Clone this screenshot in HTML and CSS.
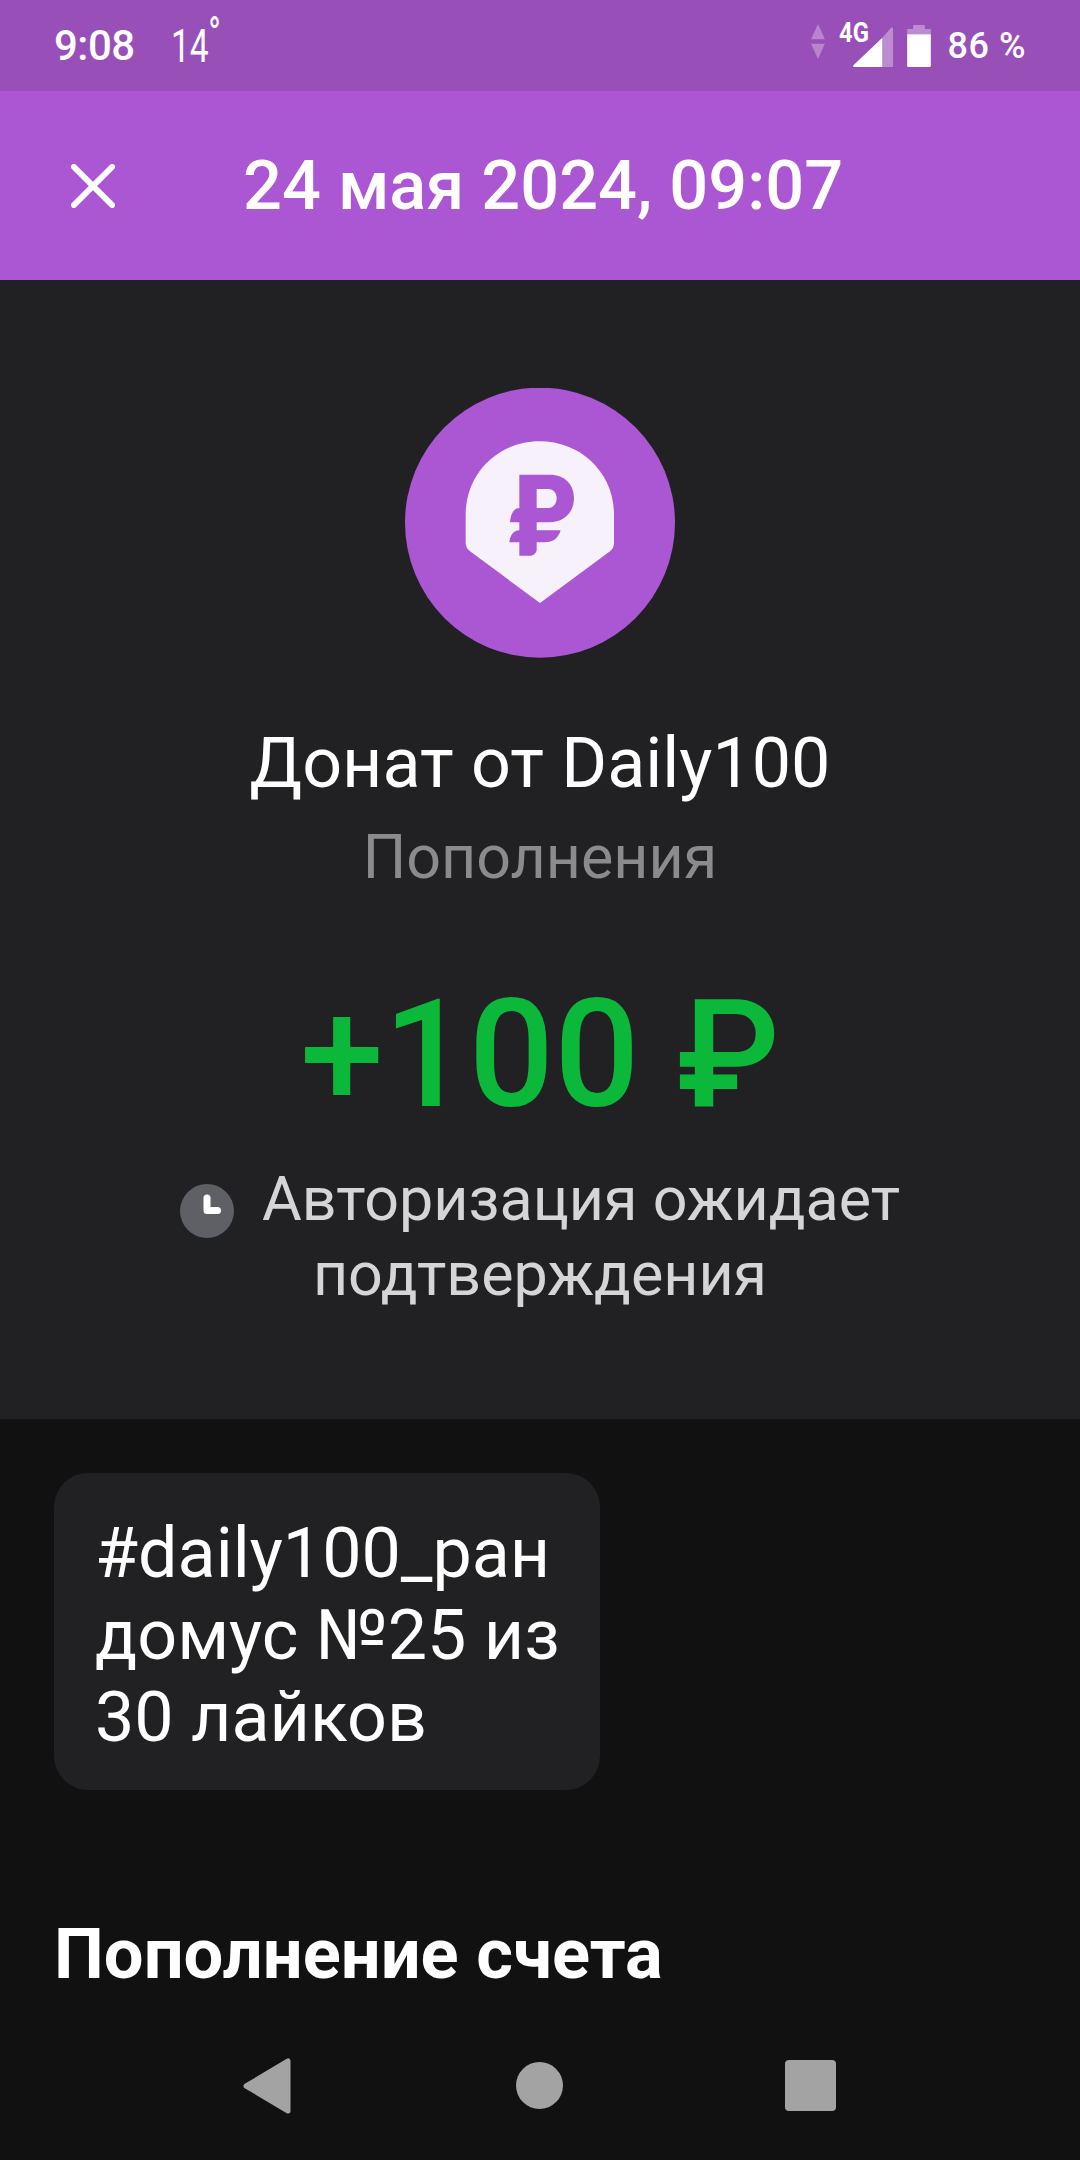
FILE: index.html
```html
<!DOCTYPE html>
<html lang="ru">
<head>
<meta charset="utf-8">
<title>Донат от Daily100</title>
<link rel="stylesheet" href="styles.css">
</head>
<body>
<div class="screen">
  <header class="status">
    <div class="status-left">
      <span class="time">9:08</span>
      <span class="temp">14<span class="deg">°</span></span>
    </div>
    <div class="status-right">
      <svg class="arrows" viewBox="155 72 42 106"><path d="M176 72 197 118H155Z M155 132H197L176 178Z"/></svg>
      <div class="signal">
        <span class="net">4G</span>
        <svg class="bars" viewBox="282 80 120 120"><path class="dim" d="M370 112 396 82Q402 78 402 86V200H370Z"/><path d="M370 112V200H288Q278 200 284 194Z"/></svg>
      </div>
      <svg class="battery" viewBox="444 72 71 126"><path class="dim" d="M462 72H497V84H515V100H444V84H462Z"/><path d="M444 100H515V194Q515 198 511 198H448Q444 198 444 194Z"/></svg>
      <span class="pct">86 %</span>
    </div>
  </header>
  <div class="appbar">
    <svg class="close" viewBox="0 0 46 46"><path d="M3 3 43 43M43 3 3 43"/></svg>
    <h1 class="appbar-title">24 мая 2024, 09:07</h1>
  </div>
  <section class="summary">
    <svg class="logo" viewBox="45 55 810 810">
      <circle class="logo-bg" cx="450" cy="459" r="405"/>
      <path class="logo-pin" d="M227 520V435C227 310 325 215 449 215C573 215 672 310 672 435V520Q672 535 660 545L450 700L240 545Q227 535 227 520Z"/>
      <path class="logo-bg" fill-rule="evenodd" d="M388 315H480C525 315 552 345 552 385C552 430 520 458 478 458H440V482H512C505 505 490 518 465 518H440V540C440 550 430 558 420 558H388V518H358C360 498 370 482 388 482V458H360C362 432 372 415 388 415ZM440 358V415H475C490 415 500 402 500 386C500 370 490 358 475 358Z"/>
    </svg>
    <h2 class="name">Донат от Daily100</h2>
    <p class="category">Пополнения</p>
    <p class="amount">+100 ₽</p>
    <p class="state"><svg class="clock" viewBox="0 0 54 54"><circle cx="27" cy="27" r="27"/><path d="M27 14V26.5H37.5"/></svg>Авторизация ожидает<br>подтверждения</p>
  </section>
  <main class="details">
    <div class="note">#daily100_ран<br>домус №25 из<br>30 лайков</div>
    <h3 class="heading">Пополнение счета</h3>
  </main>
  <nav class="navbar">
    <svg class="nav-back" viewBox="0 0 48 56"><path d="M45 3V53L3 28Z"/></svg>
    <span class="nav-home"></span>
    <span class="nav-recent"></span>
  </nav>
</div>
</body>
</html>
```
FILE: styles.css
```css
* { box-sizing: border-box; margin: 0; padding: 0; }
html, body { width: 1080px; height: 2160px; overflow: hidden; background: #111112; }
body { font-family: Roboto, "Noto Sans", sans-serif; color: #fff; }
.screen { width: 1080px; height: 2160px; display: flex; flex-direction: column; }

.status { height: 91px; flex: none; background: #994fb8; display: flex; justify-content: space-between; align-items: center; padding: 0 54px; }
.status-left { display: flex; align-items: center; gap: 36px; }
.time { font-size: 42px; font-weight: 500; letter-spacing: -0.5px; }
.temp { font-size: 46px; font-weight: 400; position: relative; display: inline-block; width: 37px; transform: scaleX(.73); transform-origin: left center; }
.deg { position: absolute; left: 51px; top: -12px; font-size: 46px; }
.status-right { display: flex; align-items: center; }
.arrows { width: 14px; height: 35px; fill: #fff; opacity: .3; margin: 0 28px 8px 0; }
.signal { position: relative; width: 40px; height: 40px; margin: 3px 14px 0 0; }
.net { position: absolute; left: -14px; top: -11px; font-size: 28px; font-weight: 700; display: inline-block; transform: scaleX(.85); transform-origin: left center; }
.bars { display: block; width: 40px; height: 40px; fill: #fff; }
.bars .dim, .battery .dim { opacity: .35; }
.battery { width: 24px; height: 42px; fill: #fff; margin: 0 17px 0 0; }
.pct { font-size: 36px; font-weight: 500; letter-spacing: .5px; }

.appbar { height: 189px; flex: none; background: #ab57d3; display: flex; align-items: center; padding-left: 71px; }
.close { width: 44px; height: 44px; fill: none; stroke: #fff; stroke-width: 6; stroke-linecap: round; margin-right: 128px; }
.appbar-title { font-size: 68.5px; font-weight: 500; white-space: nowrap; }

.summary { height: 1139px; flex: none; background: #212124; display: flex; flex-direction: column; align-items: center; padding-top: 108px; }
.logo { width: 270px; height: 270px; flex: none; display: block; }
.logo-bg { fill: #ab57d3; }
.logo-pin { fill: #f7f1fb; }
.name { font-size: 70px; font-weight: 400; line-height: 80px; margin-top: 65px; }
.category { font-size: 61px; line-height: 70px; color: #8b8b8e; margin-top: 19px; }
.amount { font-size: 150px; font-weight: 500; line-height: 164px; color: #0bb83a; margin-top: 81px; }
.state { font-size: 61px; line-height: 73px; color: #d5d5d7; text-align: center; margin-top: 26px; white-space: nowrap; }
.clock { display: inline-block; width: 54px; height: 54px; margin: -10px 28px 0 0; vertical-align: -18px; }
.clock circle { fill: #5e6065; }
.clock path { fill: none; stroke: #fff; stroke-width: 7; stroke-linecap: round; stroke-linejoin: round; }

.details { flex: 1; min-height: 0; display: flex; flex-direction: column; align-items: flex-start; padding: 54px 54px 0; overflow: hidden; }
.note { width: 546px; height: 317px; background: #212124; border-radius: 34px; font-size: 70px; line-height: 82px; padding: 39px 41px; white-space: nowrap; }
.heading { font-size: 70.5px; font-weight: 700; line-height: 76px; margin-top: 126px; }

.navbar { height: 162px; flex: none; display: flex; align-items: flex-start; background: #111112; padding-left: 243px; }
.nav-back { width: 48px; height: 56px; fill: #a3a3a3; stroke: #a3a3a3; stroke-width: 5; stroke-linejoin: round; margin-top: 60px; }
.nav-home { width: 47px; height: 47px; border-radius: 50%; background: #a3a3a3; margin: 64px 0 0 225px; }
.nav-recent { width: 51px; height: 51px; border-radius: 4px; background: #a3a3a3; margin: 62px 0 0 222px; }
```
